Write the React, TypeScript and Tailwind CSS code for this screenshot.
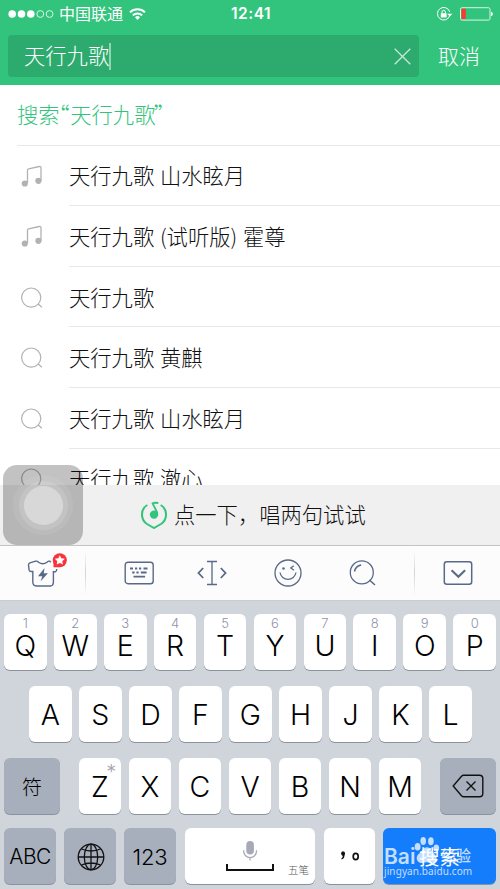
import React from "react";

type KeyProps = { label: string; hint?: string; corner?: string };

function LetterKey({ label, hint, corner }: KeyProps) {
  return (
    <div className="relative h-[56px] w-[42.7px] shrink-0 rounded-[6px] bg-white text-center text-black shadow-[0_1px_0_#8b919e]">
      {hint && (
        <span className="absolute inset-x-0 top-[2px] text-[13px] leading-[15px] font-light text-[#8f93a8]">{hint}</span>
      )}
      {corner && (
        <span className="absolute top-[4px] right-[5px] text-[20px] leading-[20px] font-light text-[#a3a6b0]">{corner}</span>
      )}
      <span className={hint ? "block pt-[14px] text-[28.5px] leading-[36px] font-light" : "block pt-[11px] text-[28.5px] leading-[36px] font-light"}>
        {label}
      </span>
    </div>
  );
}

function NoteIcon() {
  return (
    <svg className="h-[22px] w-[22px]" viewBox="0 0 22 22" fill="none">
      <path d="M6.5 18V5.3Q6.5 4.2 7.6 3.9L18.3 1.5Q20 1.2 20 2.8V16" stroke="#b2b2b2" strokeWidth="1.3" />
      <circle cx="3.8" cy="18.5" r="3.1" fill="#b2b2b2" />
      <circle cx="17.4" cy="15.8" r="3.1" fill="#b2b2b2" />
    </svg>
  );
}

function LensIcon() {
  return (
    <svg className="mt-px h-[22px] w-[22px]" viewBox="0 0 22 22" fill="none" stroke="#b2b2b2" strokeWidth="1.2">
      <circle cx="10.2" cy="10.6" r="9.6" />
      <path d="M17 16.8l3.8 3.5" />
    </svg>
  );
}

const results = [
  { icon: "note", text: "天行九歌 山水眩月" },
  { icon: "note", text: "天行九歌 (试听版) 霍尊" },
  { icon: "lens", text: "天行九歌" },
  { icon: "lens", text: "天行九歌 黄麒" },
  { icon: "lens", text: "天行九歌 山水眩月" },
  { icon: "lens", text: "天行九歌 澈心" },
];

function StatusBar() {
  return (
    <div className="relative flex h-[28px] items-center text-white">
      <svg className="ml-[8px] h-[10px] w-[47px]" viewBox="0 0 47 10">
        <circle cx="4.2" cy="5" r="3.8" fill="#fff" />
        <circle cx="13.5" cy="5" r="3.8" fill="#fff" />
        <circle cx="22.8" cy="5" r="3.8" fill="#fff" />
        <circle cx="32.3" cy="5" r="3.4" fill="none" stroke="#fff" strokeWidth=".8" />
        <circle cx="41.6" cy="5" r="3.4" fill="none" stroke="#fff" strokeWidth=".8" />
      </svg>
      <span className="ml-[4px] text-[16px] leading-[20px] font-normal">中国联通</span>
      <svg className="ml-[6px] h-[12px] w-[17px]" viewBox="0 0 17 12" fill="none" stroke="#fff" strokeWidth="2">
        <path d="M1 4.4a10.8 10.8 0 0 1 15 0" />
        <path d="M3.8 7.4a6.8 6.8 0 0 1 9.4 0" />
        <path d="M6 9.2a3.6 3.6 0 0 1 5 0L8.5 12z" fill="#fff" stroke="none" />
      </svg>
      <span className="absolute top-[4px] left-[231px] text-[15.5px] leading-[20px] font-semibold tracking-[0.5px]">12:41</span>
      <svg className="ml-auto h-[16px] w-[17px]" viewBox="0 0 17 16" fill="none" stroke="#fff">
        <path d="M13.7 9.8A6.3 6.3 0 1 1 13.8 6" strokeWidth="1" />
        <path d="M11.2 7.7h5.2l-2.6 2.8z" fill="#fff" stroke="none" />
        <rect x="4.8" y="7.2" width="5.8" height="4.3" rx=".5" fill="#fff" stroke="none" />
        <path d="M6 7.5V6a1.7 1.7 0 0 1 3.4 0v1.5" strokeWidth="1" />
      </svg>
      <svg className="mr-[7px] ml-[7px] h-[14px] w-[33px]" viewBox="0 0 33 14">
        <rect x=".5" y=".7" width="29.5" height="12.4" rx="1.6" fill="none" stroke="#d8f5e5" strokeWidth="1" />
        <rect x="1.5" y="1.8" width="4.3" height="10.2" fill="#fb3b2f" />
        <path d="M31 4.8q1.8.5 1.8 2.2T31 9.2z" fill="#fff" />
      </svg>
    </div>
  );
}

function Toolbar() {
  return (
    <div className="flex h-[55px] border-t border-[#c4c4c6] bg-[#fcfcfc] text-[#596987]">
      <div className="flex w-[85px] shrink-0 pt-[4.5px] pl-[26px]">
        <svg className="h-[38px] w-[42px]" viewBox="0 0 42 38" fill="none" stroke="currentColor" strokeWidth="1.4">
          <path d="M24.8 11.2L23.8 10.2Q22.4 9.8 21 11.2Q16.8 14.4 12.6 11.2Q11.2 9.8 9.6 10.2L3.9 11.9Q2.5 12.4 2.5 14L3.1 19.2Q3.4 20.5 5 20.5H6.8V31.3Q7 34.8 10.2 35H24.3Q27.2 34.8 27.4 31.5V20.8H29.5Q30.6 20.4 30.8 18" />
          <path d="M18.5 17L12 25.3h4.3L14.5 30.5l7.4-8.2h-4.2z" fill="currentColor" stroke="none" />
          <circle cx="33.8" cy="9.2" r="7" fill="#fa3239" stroke="none" />
          <path d="M27.5 9v7.3h6z" fill="#fa3239" stroke="none" />
          <path d="M33.8 4.2l1.5 3.1 3.5.5-2.5 2.4.6 3.4-3.1-1.6-3.1 1.6.6-3.4-2.5-2.4 3.5-.5z" fill="#fff" stroke="none" />
        </svg>
      </div>
      <div className="my-[4px] w-px bg-linear-to-b from-[#fcfcfc] via-[#d4d4d6] to-[#fcfcfc]" />
      <div className="flex flex-1 items-center justify-between pr-[37.5px] pl-[37.5px]">
        <svg className="h-[24px] w-[31px]" viewBox="0 0 31 24" fill="none" stroke="currentColor">
          <rect x="1.2" y="1.2" width="28" height="21.5" rx="2.8" strokeWidth="1.4" />
          <path d="M6 7.5h3M11 7.5h2.2M15 7.5h2.2M19.5 7.5h4M8.2 11.5H10.6M12.4 11.5H14.6M16.8 11.5H22.6M9.5 15.7h11.6" strokeWidth="1.8" />
        </svg>
        <svg className="-ml-[4px] h-[26px] w-[30px]" viewBox="0 0 30 26" fill="none" stroke="currentColor" strokeWidth="1.3">
          <path d="M15 1.5v23M10 1.5h10M10 24.5h10" />
          <path d="M6.2 8L1.5 13l4.7 5M23.8 8l4.7 5-4.7 5" strokeWidth="1.8" />
        </svg>
        <svg className="h-[28px] w-[28px]" viewBox="0 0 28 28" fill="none" stroke="currentColor" strokeWidth="1.3">
          <circle cx="14" cy="14" r="13" />
          <path d="M6 13.5a8.1 8.1 0 0 0 16 0M19.8 6.8l-3 2.2 3.2 2.3" />
          <circle cx="9.5" cy="9.5" r="1.3" fill="currentColor" stroke="none" />
        </svg>
        <svg className="h-[28px] w-[28px]" viewBox="0 0 28 28" fill="none" stroke="currentColor" strokeWidth="1.3">
          <circle cx="13.8" cy="13.4" r="11.5" />
          <path d="M6.5 12.5q1-5.5 6.7-6.5M21.5 21l5.5 5" strokeWidth="1.5" />
        </svg>
      </div>
      <div className="my-[4px] w-px bg-linear-to-b from-[#fcfcfc] via-[#d4d4d6] to-[#fcfcfc]" />
      <div className="flex w-[85px] shrink-0 items-center justify-center">
        <svg className="h-[26px] w-[30px]" viewBox="0 0 30 26" fill="none" stroke="currentColor">
          <rect x="1.3" y="1.7" width="27.4" height="22.6" rx="2.5" strokeWidth="1.5" />
          <path d="M8.6 10.3l6.8 6.5 6.7-6.5" strokeWidth="2.1" />
        </svg>
      </div>
    </div>
  );
}

function Watermark() {
  return (
    <div className="absolute top-[7px] left-[1px] h-[48px] w-[100px] text-white/75">
      <span className="absolute top-[10px] left-0 text-[21px] leading-[24px] font-semibold">Bai</span>
      <svg className="absolute top-[1px] left-[29px] h-[28px] w-[27px]" viewBox="0 0 28 30" fill="currentColor">
        <ellipse cx="4.5" cy="11.5" rx="3.1" ry="4" />
        <ellipse cx="10.5" cy="5.3" rx="3" ry="4.3" />
        <ellipse cx="18.7" cy="5.7" rx="3" ry="4.3" />
        <ellipse cx="24.5" cy="12.8" rx="3" ry="3.8" />
        <path d="M14.5 12C10.5 12 9 17 5.5 19.3C1.5 23 4 29.5 9.3 28.8Q14.5 27.5 19.2 28.8C25.3 29 26.7 22.5 22.5 19.2C19.3 16.7 18.5 12 14.5 12Z" />
      </svg>
      <span className="absolute top-[9px] left-[57px] text-[15px] leading-[24px] font-medium whitespace-nowrap">经验</span>
      <span className="absolute top-[29px] left-0 font-['Noto_Sans'] text-[10px] leading-[14px] tracking-[0.1px] whitespace-nowrap">jingyan.baidu.com</span>
    </div>
  );
}

function Keyboard() {
  const mod = "flex h-[56px] items-center justify-center rounded-[6px] bg-[#a8afbc] text-black shadow-[0_1px_0_#8b919e]";
  return (
    <div className="flex h-[289px] flex-col border-t border-[#c9ccd1] bg-[#d0d4db] px-[4px] pt-[13px]">
      <div className="flex justify-between">
        {"QWERTYUIOP".split("").map((c, i) => (
          <LetterKey key={c} label={c} hint={String((i + 1) % 10)} />
        ))}
      </div>
      <div className="mt-[16px] flex justify-between pr-[24px] pl-[25px]">
        {"ASDFGHJKL".split("").map((c) => (
          <LetterKey key={c} label={c} />
        ))}
      </div>
      <div className="mt-[16px] flex justify-between">
        <div className="flex h-[56px] w-[56px] items-center justify-center rounded-[6px] bg-[#a8afbc] text-[20px] font-light text-black shadow-[0_1px_0_#8b919e]"><span className="pt-[3px]">符</span></div>
        <div className="flex w-[343px] justify-between">
          {"ZXCVBNM".split("").map((c) => (
            <LetterKey key={c} label={c} corner={c === "Z" ? "*" : undefined} />
          ))}
        </div>
        <div className={mod + " w-[56px]"}>
          <svg className="h-[24px] w-[32px]" viewBox="0 0 32 24" fill="none" stroke="#111" strokeWidth="1.4">
            <path d="M11.7 1.3H27.5Q30.8 1.3 30.8 4.5V19.5Q30.8 22.7 27.5 22.7H11.7Q10.5 22.7 9.5 21.7L1.2 12L9.5 2.3Q10.5 1.3 11.7 1.3Z" />
            <path d="M14.5 7.5l9 9M23.5 7.5l-9 9" />
          </svg>
        </div>
      </div>
      <div className="mt-[14px] flex">
        <div className={mod + " w-[52px] pt-[2px] text-[21px] font-light tracking-[-0.6px]"}>ABC</div>
        <div className={mod + " ml-[8px] w-[52px]"}>
          <svg className="mt-[2px] ml-[1px] h-[28px] w-[28px]" viewBox="0 0 28 28" fill="none" stroke="#111" strokeWidth="1.3">
            <circle cx="14" cy="14" r="12.8" />
            <ellipse cx="14" cy="14" rx="6.7" ry="12.8" />
            <path d="M14 1v26M1 14h26M4.5 6Q14 10 23.5 6M4.5 22Q14 18 23.5 22" />
          </svg>
        </div>
        <div className={mod + " ml-[8px] w-[52px] pt-[2px] text-[22px] font-light tracking-[-0.2px]"}>123</div>
        <div className="relative ml-[9px] h-[56px] w-[130px] rounded-[6px] bg-white shadow-[0_1px_0_#8b919e]">
          <svg className="absolute top-[12px] left-[40px] h-[32px] w-[50px]" viewBox="0 0 50 32" fill="none">
            <rect x="21.3" y="1" width="7.6" height="13.5" rx="3.8" fill="#a6aab5" />
            <path d="M18.7 10.2v1a6.4 6.4 0 0 0 12.8 0v-1M25 17.5v3" stroke="#a6aab5" strokeWidth="1.3" />
            <path d="M2 24v6h46v-6" stroke="#111" strokeWidth="2" />
          </svg>
          <span className="absolute right-[6px] bottom-[5px] text-[10.5px] leading-[16px] font-light text-[#555]">五笔</span>
        </div>
        <div className="ml-[9px] flex h-[56px] w-[51px] items-center justify-center rounded-[6px] bg-white shadow-[0_1px_0_#8b919e]">
          <svg className="h-[16px] w-[22px]" viewBox="0 0 22 16" fill="none">
            <path d="M2.1 5.6a2 2 0 1 1 3.8.6Q5.7 10 2.9 11.6L2.2 10.8Q3.7 9.6 3.8 7.9Q2.2 7.5 2.1 5.6Z" fill="#111" />
            <ellipse cx="16.7" cy="8.5" rx="2.5" ry="3.2" stroke="#111" strokeWidth="1.7" />
          </svg>
        </div>
        <div className="relative ml-[8px] flex h-[56px] w-[113px] items-center justify-center rounded-[6px] bg-[#147dfb] pt-[5px] text-[20.5px] text-white shadow-[0_1px_0_#8b919e]">
          搜索
          <Watermark />
        </div>
      </div>
    </div>
  );
}

export default function App() {
  return (
    <div className="relative flex h-[889px] w-[500px] flex-col overflow-hidden bg-white font-[Inter,'Noto_Sans_CJK_SC',sans-serif]">
      <header className="h-[85px] bg-[#32c47c]">
        <StatusBar />
        <div className="mt-[7px] flex items-center">
          <div className="ml-[8px] flex h-[42px] w-[411px] items-center rounded-[4px] bg-[#2daa6d] pr-[8px] pl-[16px] text-white">
            <span className="pb-[2px] font-['Noto_Sans_CJK_SC'] text-[21.3px] leading-[30px] font-light">天行九歌</span>
            <span className="h-[27px] w-[2px] bg-[#8fd6b3]" />
            <svg className="ml-auto h-[17px] w-[17px]" viewBox="0 0 17 17" stroke="#c5ead6" strokeWidth="1.3">
              <path d="M.7.7l15.6 15.6M16.3.7L.7 16.3" />
            </svg>
          </div>
          <span className="ml-[19px] pt-px text-[21px] leading-[30px] font-light text-white">取消</span>
        </div>
      </header>

      <main className="h-[400px] overflow-hidden pl-[17px] font-['Noto_Sans_CJK_SC'] text-[21.3px] font-light text-[#111] [word-spacing:1px]">
        <div className="flex h-[60.6px] items-center border-b border-[#e8e8e8] pb-px text-[#32c47c]">
          <span className="[font-feature-settings:'palt']">
            搜索<span className="mr-[1px] -ml-[1px]">“</span>天行九歌<span className="-ml-[1.5px]">”</span>
          </span>
        </div>
        {results.map((r, i) => (
          <div key={i} className="flex h-[60.6px]">
            <div className="flex w-[52px] items-center pl-[4px]">
              {r.icon === "note" ? <NoteIcon /> : <LensIcon />}
            </div>
            <div className="flex flex-1 items-center border-b border-[#e8e8e8]">{r.text}</div>
          </div>
        ))}
      </main>

      <div className="flex h-[60px] items-center bg-[#f0f0f0] pl-[141px]">
        <svg className="h-[28px] w-[26px]" viewBox="0 0 26 28" fill="none" stroke="#32c47c" strokeWidth="2">
          <path d="M6.3 4C-.8 8.3-.7 18.6 6 23Q9 24.7 13 27Q17 24.7 20 23C26.7 18.6 26.8 8.3 19.7 4" />
          <circle cx="13" cy="13.6" r="4.2" fill="#32c47c" stroke="none" />
          <path d="M16.2 14V11.5L11.6 2.3Q13.5 1.4 17.3 2" strokeWidth="1.8" />
        </svg>
        <span className="ml-[7px] pb-[2px] font-['Noto_Sans_CJK_SC'] text-[21.3px] leading-[30px] font-light text-[#111]">点一下，唱两句试试</span>
      </div>

      <Toolbar />
      <Keyboard />

      <div className="absolute top-[465px] left-[3px] flex h-[80px] w-[80px] items-center justify-center rounded-[14px] bg-black/24">
        <div className="flex h-[60px] w-[60px] items-center justify-center rounded-full bg-white/8">
          <div className="flex h-[49px] w-[49px] items-center justify-center rounded-full bg-white/12">
            <div className="h-[39px] w-[39px] rounded-full bg-white/35" />
          </div>
        </div>
      </div>
    </div>
  );
}
